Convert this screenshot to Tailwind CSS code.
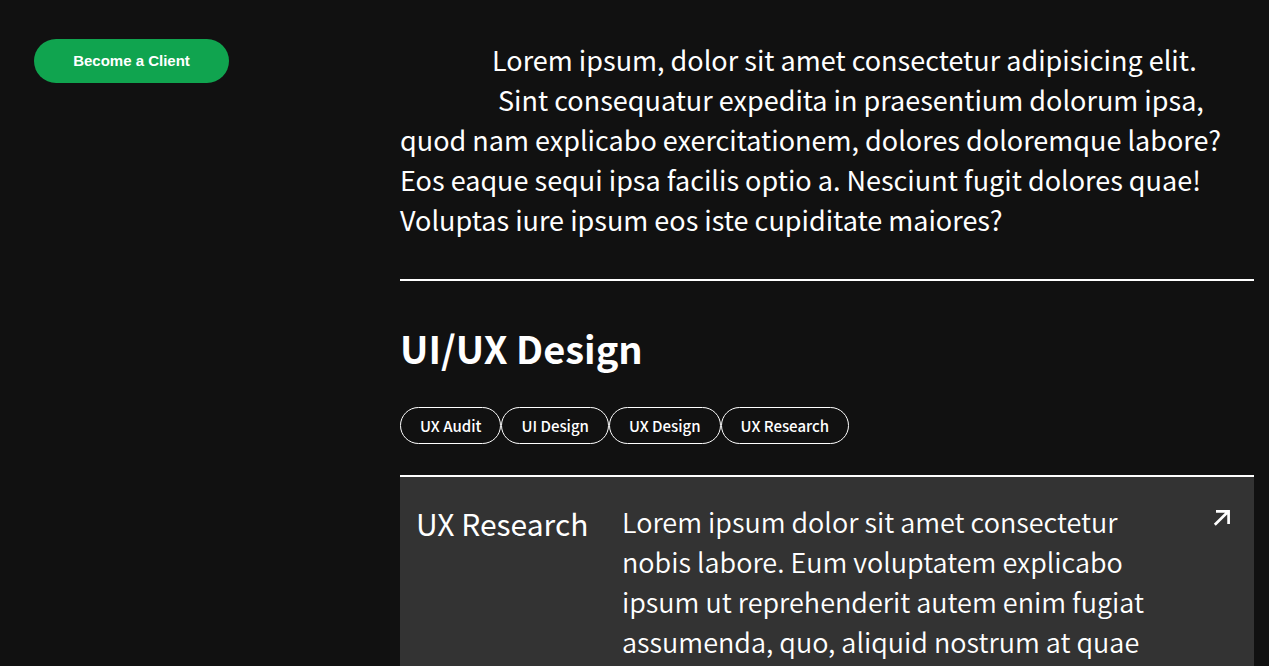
<!DOCTYPE html>
<html lang="en">
<head>
<meta charset="utf-8">
<title>Services</title>
<script src="https://cdn.jsdelivr.net/npm/@tailwindcss/browser@4"></script>
</head>
<body class="h-screen overflow-hidden bg-[#111111] font-['Noto_Sans_CJK_SC','Noto_Sans',sans-serif] text-white">
<main class="flex pr-[15px]">
  <aside class="w-[400px] shrink-0 pt-[39px] pl-[34px]">
    <button class="h-11 w-[195px] rounded-full bg-[#10a44f] font-['Liberation_Sans',Arial,sans-serif] text-[15px] font-bold">Become a Client</button>
  </aside>
  <div class="min-w-0 flex-1">
    <p class="border-b-2 border-white pt-10 pb-[39px] text-[27px] leading-10"><span class="block pl-[92px]">Lorem ipsum, dolor sit amet consectetur adipisicing elit.</span><span class="block pl-[98px]">Sint consequatur expedita in praesentium dolorum ipsa,</span>quod nam explicabo exercitationem, dolores doloremque labore?<br>Eos eaque sequi ipsa facilis optio a. Nesciunt fugit dolores quae! Voluptas iure ipsum eos iste cupiditate maiores?</p>
    <h2 class="mt-[37px] text-[38px] leading-[60px] font-bold">UI/UX Design</h2>
    <ul class="mt-[29px] flex text-[15px] leading-[35px] font-medium">
      <li class="rounded-full border border-white px-[19px]">UX Audit</li>
      <li class="rounded-full border border-white px-[19px]">UI Design</li>
      <li class="rounded-full border border-white px-[19px]">UX Design</li>
      <li class="rounded-full border border-white px-[19px]">UX Research</li>
    </ul>
    <section class="mt-[31px] flex min-h-[240px] border-t-2 border-white bg-[#333333] pt-[25px] pr-4 pl-4">
      <h3 class="w-[206px] shrink-0 text-[30px] leading-[42px]">UX Research</h3>
      <p class="w-[530px] text-[27px] leading-10 font-[350]">Lorem ipsum dolor sit amet consectetur nobis labore. Eum voluptatem explicabo ipsum ut reprehenderit autem enim fugiat assumenda, quo, aliquid nostrum at quae</p>
      <a href="#" aria-label="Open UX Research" class="ml-auto h-8 w-8"><svg viewBox="0 0 32 32" class="h-8 w-8" fill="none" stroke="currentColor" stroke-width="2.7"><path d="M8.8 22.7 22.5 9.3M10 9.3H22.6V22"/></svg></a>
    </section>
  </div>
</main>
</body>
</html>
